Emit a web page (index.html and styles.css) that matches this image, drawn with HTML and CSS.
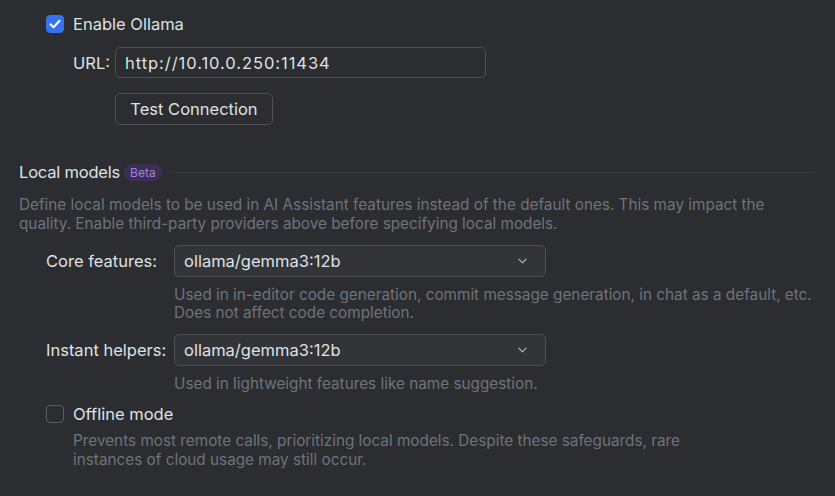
FILE: index.html
```html
<!DOCTYPE html>
<html>
<head>
<meta charset="utf-8">
<link rel="stylesheet" href="styles.css">
</head>
<body>
<div class="page">
  <div class="ollama">
    <label class="check-row">
      <span class="checkbox checked">
        <svg viewBox="0 0 18 18" width="18" height="18"><path d="M4.5 9.2 L7.6 12.2 L13.5 5.8" fill="none" stroke="#fff" stroke-width="2" stroke-linecap="round" stroke-linejoin="round"/></svg>
      </span>
      <span class="label">Enable Ollama</span>
    </label>
    <div class="url-row">
      <span class="label">URL:</span>
      <div class="input">http://10.10.0.250:11434</div>
    </div>
    <div class="btn-row">
      <div class="button">Test Connection</div>
    </div>
  </div>

  <div class="section-title">
    <span class="title">Local models</span>
    <span class="badge">Beta</span>
    <span class="sep"></span>
  </div>
  <p class="desc">Define local models to be used in AI Assistant features instead of the default ones. This may impact the quality. Enable third-party providers above before specifying local models.</p>

  <div class="form">
    <span class="label flabel">Core features:</span>
    <div class="combo">ollama/gemma3:12b<svg class="chev" viewBox="0 0 10 6" width="9" height="6"><path d="M1 1 L5 5 L9 1" fill="none" stroke="#b4b8bf" stroke-width="1.3" stroke-linecap="round" stroke-linejoin="round"/></svg></div>
    <span></span>
    <p class="hint">Used in in-editor code generation, commit message generation, in chat as a default, etc.<br>Does not affect code completion.</p>
    <span class="label flabel">Instant helpers:</span>
    <div class="combo">ollama/gemma3:12b<svg class="chev" viewBox="0 0 10 6" width="9" height="6"><path d="M1 1 L5 5 L9 1" fill="none" stroke="#b4b8bf" stroke-width="1.3" stroke-linecap="round" stroke-linejoin="round"/></svg></div>
    <span></span>
    <p class="hint">Used in lightweight features like name suggestion.</p>
  </div>

  <div class="offline">
    <label class="check-row">
      <span class="checkbox"></span>
      <span class="label">Offline mode</span>
    </label>
    <p class="hint indent">Prevents most remote calls, prioritizing local models. Despite these safeguards, rare<br>instances of cloud usage may still occur.</p>
  </div>
</div>
</body>
</html>
```
FILE: styles.css
```css
html, body {
  margin: 0;
  padding: 0;
  background: #2b2d30;
}
body {
  font-family: "Inter", "Noto Sans", sans-serif;
  font-size: 16.5px;
  color: #dfe1e5;
  width: 835px;
  height: 496px;
  overflow: hidden;
}
.page {
  padding: 14px 0 0 19px;
}
.ollama {
  padding-left: 27px;
}
.check-row {
  display: flex;
  align-items: center;
  gap: 9px;
  height: 20px;
}
.checkbox {
  width: 18px;
  height: 18px;
  box-sizing: border-box;
  border-radius: 4px;
  border: 1px solid #5a5d63;
  background: #2b2d30;
  display: flex;
}
.checkbox.checked {
  background: #3574f0;
  border-color: #3574f0;
}
.checkbox.checked svg {
  margin: -1px;
}
.label {
  color: #dfe1e5;
  white-space: nowrap;
}
.url-row {
  display: flex;
  align-items: center;
  margin-top: 13px;
  margin-left: 27px;
  gap: 5px;
}
.input {
  width: 371px;
  height: 31px;
  box-sizing: border-box;
  border: 1px solid #4e5157;
  border-radius: 5px;
  padding: 0 9px;
  display: flex;
  align-items: center;
  color: #dfe1e5;
  letter-spacing: 0.95px;
}
.btn-row {
  margin-top: 15px;
  padding-left: 69px;
}
.button {
  display: inline-flex;
  align-items: center;
  justify-content: center;
  width: 158px;
  height: 32px;
  box-sizing: border-box;
  border: 1px solid #4e5157;
  border-radius: 5px;
  color: #dfe1e5;
}
.section-title {
  display: flex;
  align-items: center;
  margin-top: 37px;
  gap: 4px;
  width: 796px;
}
.title {
  letter-spacing: -0.2px;
}
.badge {
  font-size: 12px;
  color: #a47ce8;
  background: #3a3150;
  border-radius: 9px;
  padding: 1px 6px;
  line-height: 15px;
}
.sep {
  flex: 1;
  height: 1px;
  background: #393b40;
  margin-left: 5px;
}
.desc {
  margin: 13px 0 0 0;
  color: #6f737a;
  font-size: 15.3px;
  line-height: 19px;
  width: 770px;
}
.form {
  display: grid;
  grid-template-columns: 128px 372px;
  margin-top: 12px;
  margin-left: 27px;
  align-items: center;
}
.combo {
  height: 32px;
  box-sizing: border-box;
  border: 1px solid #4b4e54;
  background: #323438;
  border-radius: 5px;
  padding: 0 9px;
  display: flex;
  align-items: center;
  justify-content: space-between;
  color: #dfe1e5;
}
.chev {
  margin-right: 9px;
}
.hint {
  margin: 9px 0 12px 0;
  color: #6f737a;
  font-size: 15.3px;
  line-height: 18px;
  white-space: nowrap;
}
.offline {
  margin-left: 27px;
  margin-top: -1px;
}
.indent {
  margin-left: 27px;
  margin-top: 7px;
  line-height: 19px;
}
```
